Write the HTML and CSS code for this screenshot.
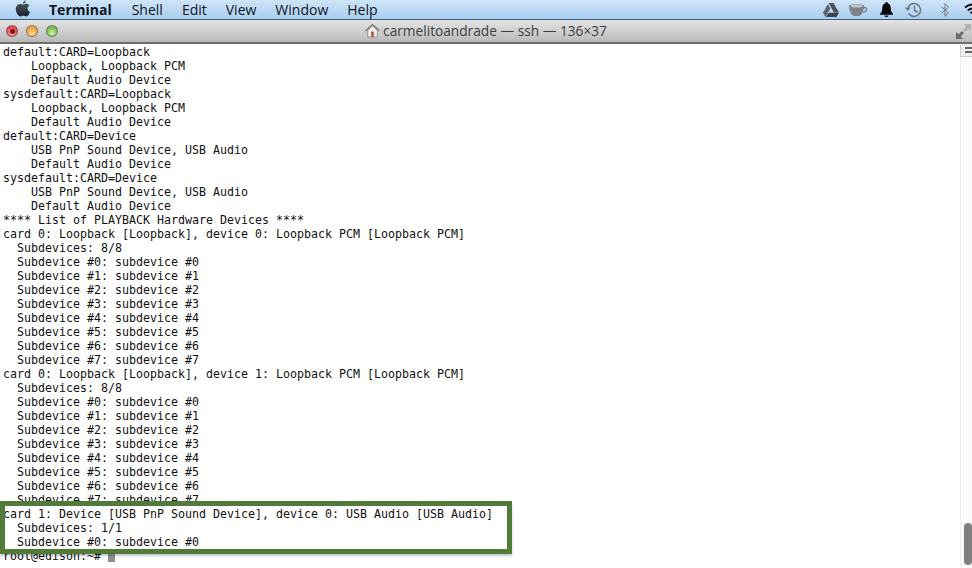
FILE: index.html
```html
<!DOCTYPE html>
<html lang="en">
<head>
<meta charset="utf-8">
<title>carmelitoandrade — ssh — 136×37</title>
<link rel="stylesheet" href="styles.css">
</head>
<body>
<header class="menubar">
  <svg class="apple" width="16" height="17" viewBox="0 0 16 17"><defs><linearGradient id="ag" x1="0" y1="0" x2="0" y2="1"><stop offset="0" stop-color="#5a6068"/><stop offset="1" stop-color="#14202e"/></linearGradient></defs><path fill="url(#ag)" d="M11 0.5c.1 1.8-1.4 3.4-3.1 3.3C7.800 2.100 9.400.6 11 .5zM8 4.600c.8 0 1.800-.8 3.200-.8 1.200 0 2.500.6 3.200 1.700-2.700 1.600-2.300 5.300.6 6.500-.7 1.800-2.100 4.500-3.800 4.500-1 0-1.500-.7-2.800-.7s-1.800.7-2.800.7C3.500 16.500.8 12.800.8 9.300c0-3.300 2-5.400 4.200-5.400 1.300 0 2.300.7 3 .7z"/></svg>
  <nav class="menus">
    <span class="menu app">Terminal</span>
    <span class="menu">Shell</span>
    <span class="menu">Edit</span>
    <span class="menu">View</span>
    <span class="menu">Window</span>
    <span class="menu">Help</span>
  </nav>
  <div class="status">
    <svg width="16" height="14" viewBox="0 0 16 14"><path fill="#4c5056" d="M5.500 0h5l5.500 9.500h-5z"/><path fill="#5e6268" d="M4.800 1.200l2.500 4.400L2.500 14 0 9.700z"/><path fill="#3f4349" d="M5.500 9.800H16L13.500 14H3z"/></svg>
    <svg width="20" height="14" viewBox="0 0 20 14"><path fill="#7d8288" d="M0 2.500C3 .8 12 .8 15 2.500c0 5-2 10-5 10.500H5C2 12.500 0 7.500 0 2.500z"/><ellipse cx="7.500" cy="3" rx="6" ry="1.600" fill="#c2c8cd"/><path fill="none" stroke="#7d8288" stroke-width="1.500" d="M14.500 4.500c3.500-.8 4.500 3.500 0 4.800"/></svg>
    <svg width="15" height="15" viewBox="0 0 15 15"><path fill="#07090c" d="M7.500 0c.8 0 1.200.5 1.200 1.200 2.300.6 3 2.500 3 4.800 0 3 .9 4.500 2.300 5.800v1H1v-1C2.400 10.500 3.300 9 3.300 6c0-2.300.7-4.200 3-4.800C6.300.5 6.700 0 7.500 0z"/><path fill="#07090c" d="M5.500 13.500h4c0 1-1 1.500-2 1.500s-2-.5-2-1.500z"/></svg>
    <svg class="clock" width="17" height="16" viewBox="0 0 17 16"><g fill="none" stroke="#6c737a" stroke-width="1.500"><path d="M3 5.500A6.500 6.500 0 1 1 3.600 11.500"/><path d="M9.500 4v4.500l3 1.500"/></g><path fill="#6c737a" d="M0 5.500h5.500L2.800 9z"/></svg>
    <svg class="bt" width="8" height="14" viewBox="0 0 8 14"><path fill="none" stroke="#70777e" stroke-width="1" d="M.5 3.800l7 6-3.500 3.500V.7l3.500 3.500-7 6"/></svg>
    <svg width="18" height="13" viewBox="0 0 18 13"><g fill="none" stroke="#0b0d10" stroke-width="2"><path d="M1 4.500c4.500-4 11.500-4 16 0"/><path d="M3.800 7.500c3-2.600 7.400-2.600 10.400 0"/><path d="M6.500 10.300c1.400-1.200 3.600-1.200 5 0"/></g></svg>
  </div>
</header>
<div class="titlebar">
  <div class="lights">
    <span class="light red"><i class="dot"></i></span>
    <span class="light amber"></span>
    <span class="light green"></span>
  </div>
  <div class="title">
    <svg width="15" height="15" viewBox="0 0 14 14"><path fill="#f1eee8" stroke="#8d8d88" stroke-width=".8" d="M2.500 13V6.800L7 2.500l4.500 4.300V13z"/><path fill="none" stroke="#77766f" stroke-width="1.100" d="M.6 7.500L7 1.200l6.400 6.300"/><path fill="#b4523f" d="M5.800 8h2.400v5H5.800z"/></svg>
    <span>carmelitoandrade — ssh — 136×37</span>
  </div>
  <svg class="fullscreen" width="15" height="15" viewBox="0 0 15 15"><path fill="#6b6b6b" d="M0 15V8l2.500 2.200L6 7l2 2-3.300 3.400L7 15z"/><path fill="#b2b2b2" d="M15 0v7l-2.500-2.200L9 8 7 6l3.300-3.400L8 0z"/></svg>
</div>
<main class="terminal">
<pre class="output">default:CARD=Loopback
    Loopback, Loopback PCM
    Default Audio Device
sysdefault:CARD=Loopback
    Loopback, Loopback PCM
    Default Audio Device
default:CARD=Device
    USB PnP Sound Device, USB Audio
    Default Audio Device
sysdefault:CARD=Device
    USB PnP Sound Device, USB Audio
    Default Audio Device
**** List of PLAYBACK Hardware Devices ****
card 0: Loopback [Loopback], device 0: Loopback PCM [Loopback PCM]
  Subdevices: 8/8
  Subdevice #0: subdevice #0
  Subdevice #1: subdevice #1
  Subdevice #2: subdevice #2
  Subdevice #3: subdevice #3
  Subdevice #4: subdevice #4
  Subdevice #5: subdevice #5
  Subdevice #6: subdevice #6
  Subdevice #7: subdevice #7
card 0: Loopback [Loopback], device 1: Loopback PCM [Loopback PCM]
  Subdevices: 8/8
  Subdevice #0: subdevice #0
  Subdevice #1: subdevice #1
  Subdevice #2: subdevice #2
  Subdevice #3: subdevice #3
  Subdevice #4: subdevice #4
  Subdevice #5: subdevice #5
  Subdevice #6: subdevice #6
  Subdevice #7: subdevice #7
card 1: Device [USB PnP Sound Device], device 0: USB Audio [USB Audio]
  Subdevices: 1/1
  Subdevice #0: subdevice #0
root@edison:~# <span class="cursor"></span></pre>
  <div class="highlight"></div>
  <div class="splitter"><i></i></div>
  <div class="scrollbar"><div class="thumb"></div></div>
</main>
</body>
</html>
```
FILE: styles.css
```css
* { box-sizing: border-box; }
html, body { margin: 0; height: 100%; }
body {
  width: 972px;
  height: 568px;
  overflow: hidden;
  display: flex;
  flex-direction: column;
  background: #fff;
  font-family: "Open Sans", "Noto Sans", sans-serif;
}
.menubar {
  height: 20px;
  flex: none;
  display: flex;
  align-items: center;
  overflow: hidden;
  padding-left: 15px;
  background: linear-gradient(#cfe4f8, #a9cdf0);
  border-bottom: 1px solid #3f5f80;
  color: #10151b;
  font-size: 14px;
}
.apple { flex: none; margin-top: -2px; }
.menus { display: flex; gap: 19px; margin-left: 18px; }
.menu { line-height: 19px; }
.app { font-weight: 700; margin-right: 1px; }
.status {
  margin-left: auto;
  display: flex;
  align-items: center;
  gap: 10px;
  margin-right: -10px;
}
.status svg { display: block; flex: none; }
.clock { margin-left: 1px; }
.bt { margin: 0 5px 0 9px; }
.titlebar {
  height: 24px;
  flex: none;
  position: relative;
  display: flex;
  align-items: center;
  justify-content: center;
  background: linear-gradient(#e4e4e4, #b9b9b9);
  border-bottom: 2px solid #6f6f6f;
  color: #3d3d3d;
  font-size: 13.7px;
}
.lights {
  position: absolute;
  left: 6px;
  top: 5px;
  display: flex;
  gap: 8px;
}
.light {
  width: 12px;
  height: 12px;
  border-radius: 50%;
  display: flex;
  align-items: center;
  justify-content: center;
  border: 1px solid rgba(70, 70, 70, .55);
}
.red { background: radial-gradient(circle at 50% 75%, #ffb0b0, #e4484e 65%); }
.amber { background: radial-gradient(circle at 50% 75%, #ffdf9c, #eda43c 65%); }
.green { background: radial-gradient(circle at 50% 75%, #cdf2a6, #79bd52 65%); }
.dot { width: 5px; height: 5px; border-radius: 50%; background: #7a1420; }
.title {
  display: flex;
  align-items: center;
  gap: 3px;
  margin-top: -1px;
}
.title svg { display: block; flex: none; }
.fullscreen { position: absolute; right: 1px; top: 4px; }
.terminal {
  flex: 1;
  position: relative;
  overflow: hidden;
  background: #fff;
}
.output {
  margin: 0;
  padding: 1px 0 0 3px;
  font-family: "DejaVu Sans Mono", monospace;
  font-size: 11.63px;
  line-height: 14px;
  color: #111;
}
.cursor {
  display: inline-block;
  width: 7px;
  height: 11px;
  margin-bottom: -2px;
  background: #8f8f8f;
}
.highlight {
  position: absolute;
  left: 0;
  top: 457px;
  width: 512px;
  height: 53px;
  border: 5px solid #527a38;
  box-shadow: 0 2px 2px rgba(0, 0, 0, .22);
}
.splitter {
  position: absolute;
  right: 0;
  top: 0;
  width: 12px;
  height: 13px;
  padding: 3px 0 0 4px;
  background: #eee;
  border-left: 1px solid #ccc;
  border-bottom: 1px solid #ccc;
}
.splitter i {
  display: block;
  height: 6px;
  border-top: 2px solid #666;
  border-bottom: 2px solid #666;
}
.scrollbar {
  position: absolute;
  right: 0;
  top: 13px;
  bottom: 0;
  width: 12px;
  padding: 0 0 3px 3px;
  display: flex;
  align-items: flex-end;
  background: #fafafa;
  border-left: 1px solid #eee;
}
.thumb {
  width: 8px;
  height: 42px;
  border-radius: 4px;
  background: #7f7f7f;
}
```
